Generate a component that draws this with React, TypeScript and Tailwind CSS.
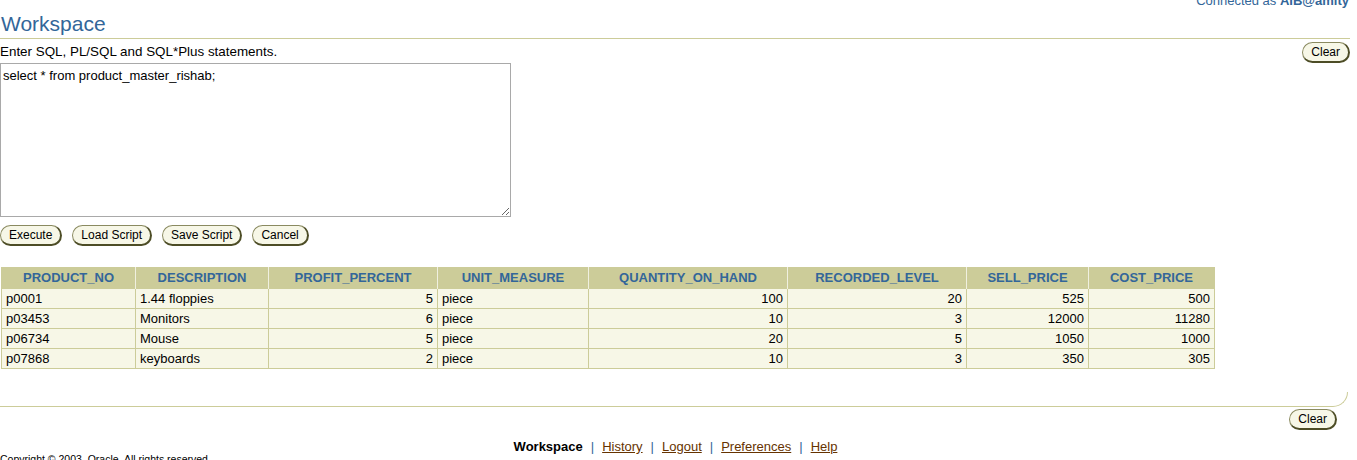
import React from "react";

const cols = [
  { name: "PRODUCT_NO", w: 134, right: false },
  { name: "DESCRIPTION", w: 133, right: false },
  { name: "PROFIT_PERCENT", w: 169, right: true },
  { name: "UNIT_MEASURE", w: 151, right: false },
  { name: "QUANTITY_ON_HAND", w: 199, right: true },
  { name: "RECORDED_LEVEL", w: 179, right: true },
  { name: "SELL_PRICE", w: 122, right: true },
  { name: "COST_PRICE", w: 126, right: true },
];

const rows = [
  ["p0001", "1.44 floppies", "5", "piece", "100", "20", "525", "500"],
  ["p03453", "Monitors", "6", "piece", "10", "3", "12000", "11280"],
  ["p06734", "Mouse", "5", "piece", "20", "5", "1050", "1000"],
  ["p07868", "keyboards", "2", "piece", "10", "3", "350", "305"],
];

function Btn({ children }: { children: React.ReactNode }) {
  return (
    <button className="h-[21px] px-[8px] rounded-full bg-[#f7f7e7] border border-[#8a8a60] border-r-2 border-b-2 border-r-[#4d4d26] border-b-[#4d4d26] text-[12px] leading-[17px] text-black">
      {children}
    </button>
  );
}

export default function App() {
  return (
    <div className="w-[1357px] h-[460px] overflow-hidden bg-white font-['Liberation_Sans',Arial,sans-serif] text-black">
      <div className="flex justify-end pr-[8px] h-[12px] -mt-[7px] text-[13px] leading-[15px] text-[#336699]">
        <span>
          Connected as <b>AIB@amity</b>
        </span>
      </div>
      <h1 className="text-[21px] leading-[24px] text-[#336699] pl-[1px] mt-[7px]">Workspace</h1>
      <div className="w-[1350px] h-[1px] bg-[#cccc99] mt-[2px]"></div>
      <div className="flex justify-between items-start w-[1350px] mt-[3px]">
        <div className="text-[13.4px] leading-[15px] pt-[2px]">Enter SQL, PL/SQL and SQL*Plus statements.</div>
        <Btn>Clear</Btn>
      </div>
      <textarea
        className="block w-[511px] h-[154px] border border-[#a9a9a9] text-[13px] leading-[15px] px-[2px] pt-[4px] outline-none resize-y"
        defaultValue="select * from product_master_rishab;"
      />
      <div className="flex gap-[10px] mt-[8px]">
        <Btn>Execute</Btn>
        <Btn>Load Script</Btn>
        <Btn>Save Script</Btn>
        <Btn>Cancel</Btn>
      </div>
      <table className="mt-[21px] ml-[1px] table-fixed border-collapse border border-[#cccc99] text-[13px]">
        <colgroup>
          {cols.map((c) => (
            <col key={c.name} style={{ width: c.w }} />
          ))}
        </colgroup>
        <thead>
          <tr className="bg-[#cccc99] h-[21px]">
            {cols.map((c) => (
              <th
                key={c.name}
                className="border-x border-x-[#f0f0e0] first:border-l-[#cccc99] last:border-r-[#cccc99] text-[#336699] font-bold text-center px-[4px] leading-[20px]"
              >
                {c.name}
              </th>
            ))}
          </tr>
        </thead>
        <tbody>
          {rows.map((r, i) => (
            <tr key={i} className="bg-[#f7f7e7] h-[20px]">
              {r.map((v, j) => (
                <td
                  key={j}
                  className={`border border-[#cccc99] px-[4px] leading-[18px] ${cols[j].right ? "text-right" : "text-left"}`}
                >
                  {v}
                </td>
              ))}
            </tr>
          ))}
        </tbody>
      </table>
      <div className="w-[1348px] h-[15px] mt-[23px] border-b border-r border-[#cccc99] rounded-br-[15px]"></div>
      <div className="flex justify-end w-[1337px] mt-[2px]">
        <Btn>Clear</Btn>
      </div>
      <div className="flex justify-center items-center gap-[8px] text-[13px] leading-[15px] mt-[9px] pr-[6px]">
        <span className="font-bold">Workspace</span>
        <span className="text-[#336699]">|</span>
        <a className="underline text-[#663300]">History</a>
        <span className="text-[#336699]">|</span>
        <a className="underline text-[#663300]">Logout</a>
        <span className="text-[#336699]">|</span>
        <a className="underline text-[#663300]">Preferences</a>
        <span className="text-[#336699]">|</span>
        <a className="underline text-[#663300]">Help</a>
      </div>
      <div className="text-[10.5px] leading-[12px] mt-[-1px]">Copyright © 2003, Oracle. All rights reserved.</div>
    </div>
  );
}
